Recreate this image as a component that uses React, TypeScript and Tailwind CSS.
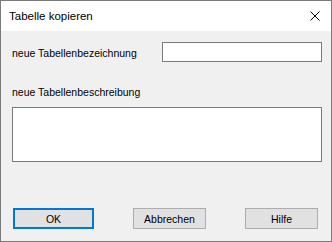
import React from "react";

const font = { fontFamily: '"Liberation Sans", Arial, sans-serif' };

const App: React.FC = () => {
  return (
    <div
      className="w-[332px] h-[242px] flex flex-col border border-[#7a7a7a] bg-[#f0f0f0] text-black"
      style={font}
    >
      {/* title bar */}
      <div className="h-[30px] bg-white flex items-center justify-between pl-[8px] pr-[11px]">
        <span className="text-[11.5px] leading-[14px]">Tabelle kopieren</span>
        <svg width="10" height="10" viewBox="0 0 10 10" className="mt-[-1px]">
          <path d="M0.5 0.5 L9.5 9.5 M9.5 0.5 L0.5 9.5" stroke="#000" strokeWidth="1" fill="none" />
        </svg>
      </div>

      {/* client area */}
      <div className="flex-1 flex flex-col pt-[11px] pl-[11px] pr-[9px]">
        <div className="flex items-center justify-between h-[20px]">
          <label className="text-[10.5px] leading-[12px] mt-[1px]">neue Tabellenbezeichnung</label>
          <input
            type="text"
            className="w-[160px] h-[20px] bg-white border border-[#7a7a7a] outline-none"
          />
        </div>

        <label className="mt-[24px] text-[10.5px] leading-[12px]">neue Tabellenbeschreibung</label>
        <textarea className="mt-[9px] w-full h-[55px] bg-white border border-[#7a7a7a] outline-none resize-none" />

        <div className="mt-[46px] ml-[1px] mr-[4px] flex justify-between">
          <button className="w-[81px] h-[21px] bg-[#e1e1e1] border-2 border-[#0078d7] text-[10.5px] leading-[12px]">
            OK
          </button>
          <button className="w-[73px] h-[21px] bg-[#e1e1e1] border border-[#adadad] text-[10.5px] leading-[12px]">
            Abbrechen
          </button>
          <button className="w-[73px] h-[21px] bg-[#e1e1e1] border border-[#adadad] text-[10.5px] leading-[12px]">
            Hilfe
          </button>
        </div>
      </div>
    </div>
  );
};

export default App;
